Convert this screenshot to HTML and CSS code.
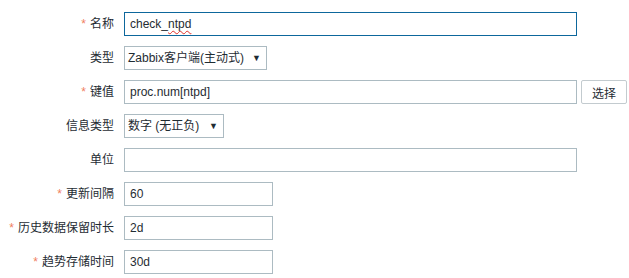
FILE: index.html
```html
<!DOCTYPE html>
<html lang="zh-CN">

<head>
    <meta charset="UTF-8">
    <meta name="viewport" content="width=device-width, initial-scale=1.0">
    <title>监控项</title>
    <link rel="stylesheet" href="styles.css">
</head>

<body>
    <form class="item-form">
        <label class="label req">名称</label>
        <div class="field">
            <div class="input wide focus">check_<span class="typo">ntpd</span></div>
        </div>

        <label class="label">类型</label>
        <div class="field">
            <div class="select type-sel">Zabbix客户端(主动式)<span class="arrow">▼</span></div>
        </div>

        <label class="label req">键值</label>
        <div class="field">
            <input class="input wide" type="text" value="proc.num[ntpd]">
            <button class="btn" type="button">选择</button>
        </div>

        <label class="label">信息类型</label>
        <div class="field">
            <div class="select info-sel">数字 (无正负)<span class="arrow">▼</span></div>
        </div>

        <label class="label">单位</label>
        <div class="field">
            <input class="input wide" type="text" value="">
        </div>

        <label class="label req">更新间隔</label>
        <div class="field">
            <input class="input short" type="text" value="60">
        </div>

        <label class="label req">历史数据保留时长</label>
        <div class="field">
            <input class="input short" type="text" value="2d">
        </div>

        <label class="label req">趋势存储时间</label>
        <div class="field">
            <input class="input short" type="text" value="30d">
        </div>
    </form>
</body>

</html>
```

FILE: styles.css
```css
* {
    margin: 0;
    padding: 0;
    box-sizing: border-box;
}

body {
    background: #fff;
    color: #1f2c33;
    font-family: "Liberation Sans", Arial, "Noto Sans CJK SC", sans-serif;
    font-size: 12px;
}

.item-form {
    display: grid;
    grid-template-columns: 114px auto;
    column-gap: 10px;
    row-gap: 10px;
    padding-top: 12px;
}

.label {
    height: 24px;
    line-height: 24px;
    text-align: right;
    white-space: nowrap;
}

.req::before {
    content: "*";
    color: #f0805f;
    margin-right: 4px;
}

.field {
    display: flex;
    align-items: center;
    gap: 4px;
    height: 24px;
}

.input {
    height: 24px;
    border: 1px solid #acbbc2;
    background: #fff;
    color: #1f2c33;
    font-family: inherit;
    font-size: 12px;
    padding: 0 5px;
    outline: none;
}

div.input {
    line-height: 22px;
}

.wide {
    width: 453px;
}

.short {
    width: 149px;
}

.focus {
    border-color: #0d679c;
}

.typo {
    text-decoration: underline wavy #e0302a;
    text-decoration-thickness: 1px;
    text-underline-offset: 2px;
}

.select {
    height: 24px;
    line-height: 22px;
    border: 1px solid #acbbc2;
    padding: 0 0 0 3px;
    display: flex;
    justify-content: space-between;
}

.type-sel {
    width: 143px;
}

.info-sel {
    width: 100px;
}

.arrow {
    font-size: 9px;
    padding-right: 5px;
    color: #1f2c33;
}

.btn {
    width: 46px;
    height: 24px;
    border: 1px solid #c3cbcf;
    border-radius: 2px;
    background: #fff;
    color: #1f2c33;
    font-family: inherit;
    font-size: 12px;
}
```
